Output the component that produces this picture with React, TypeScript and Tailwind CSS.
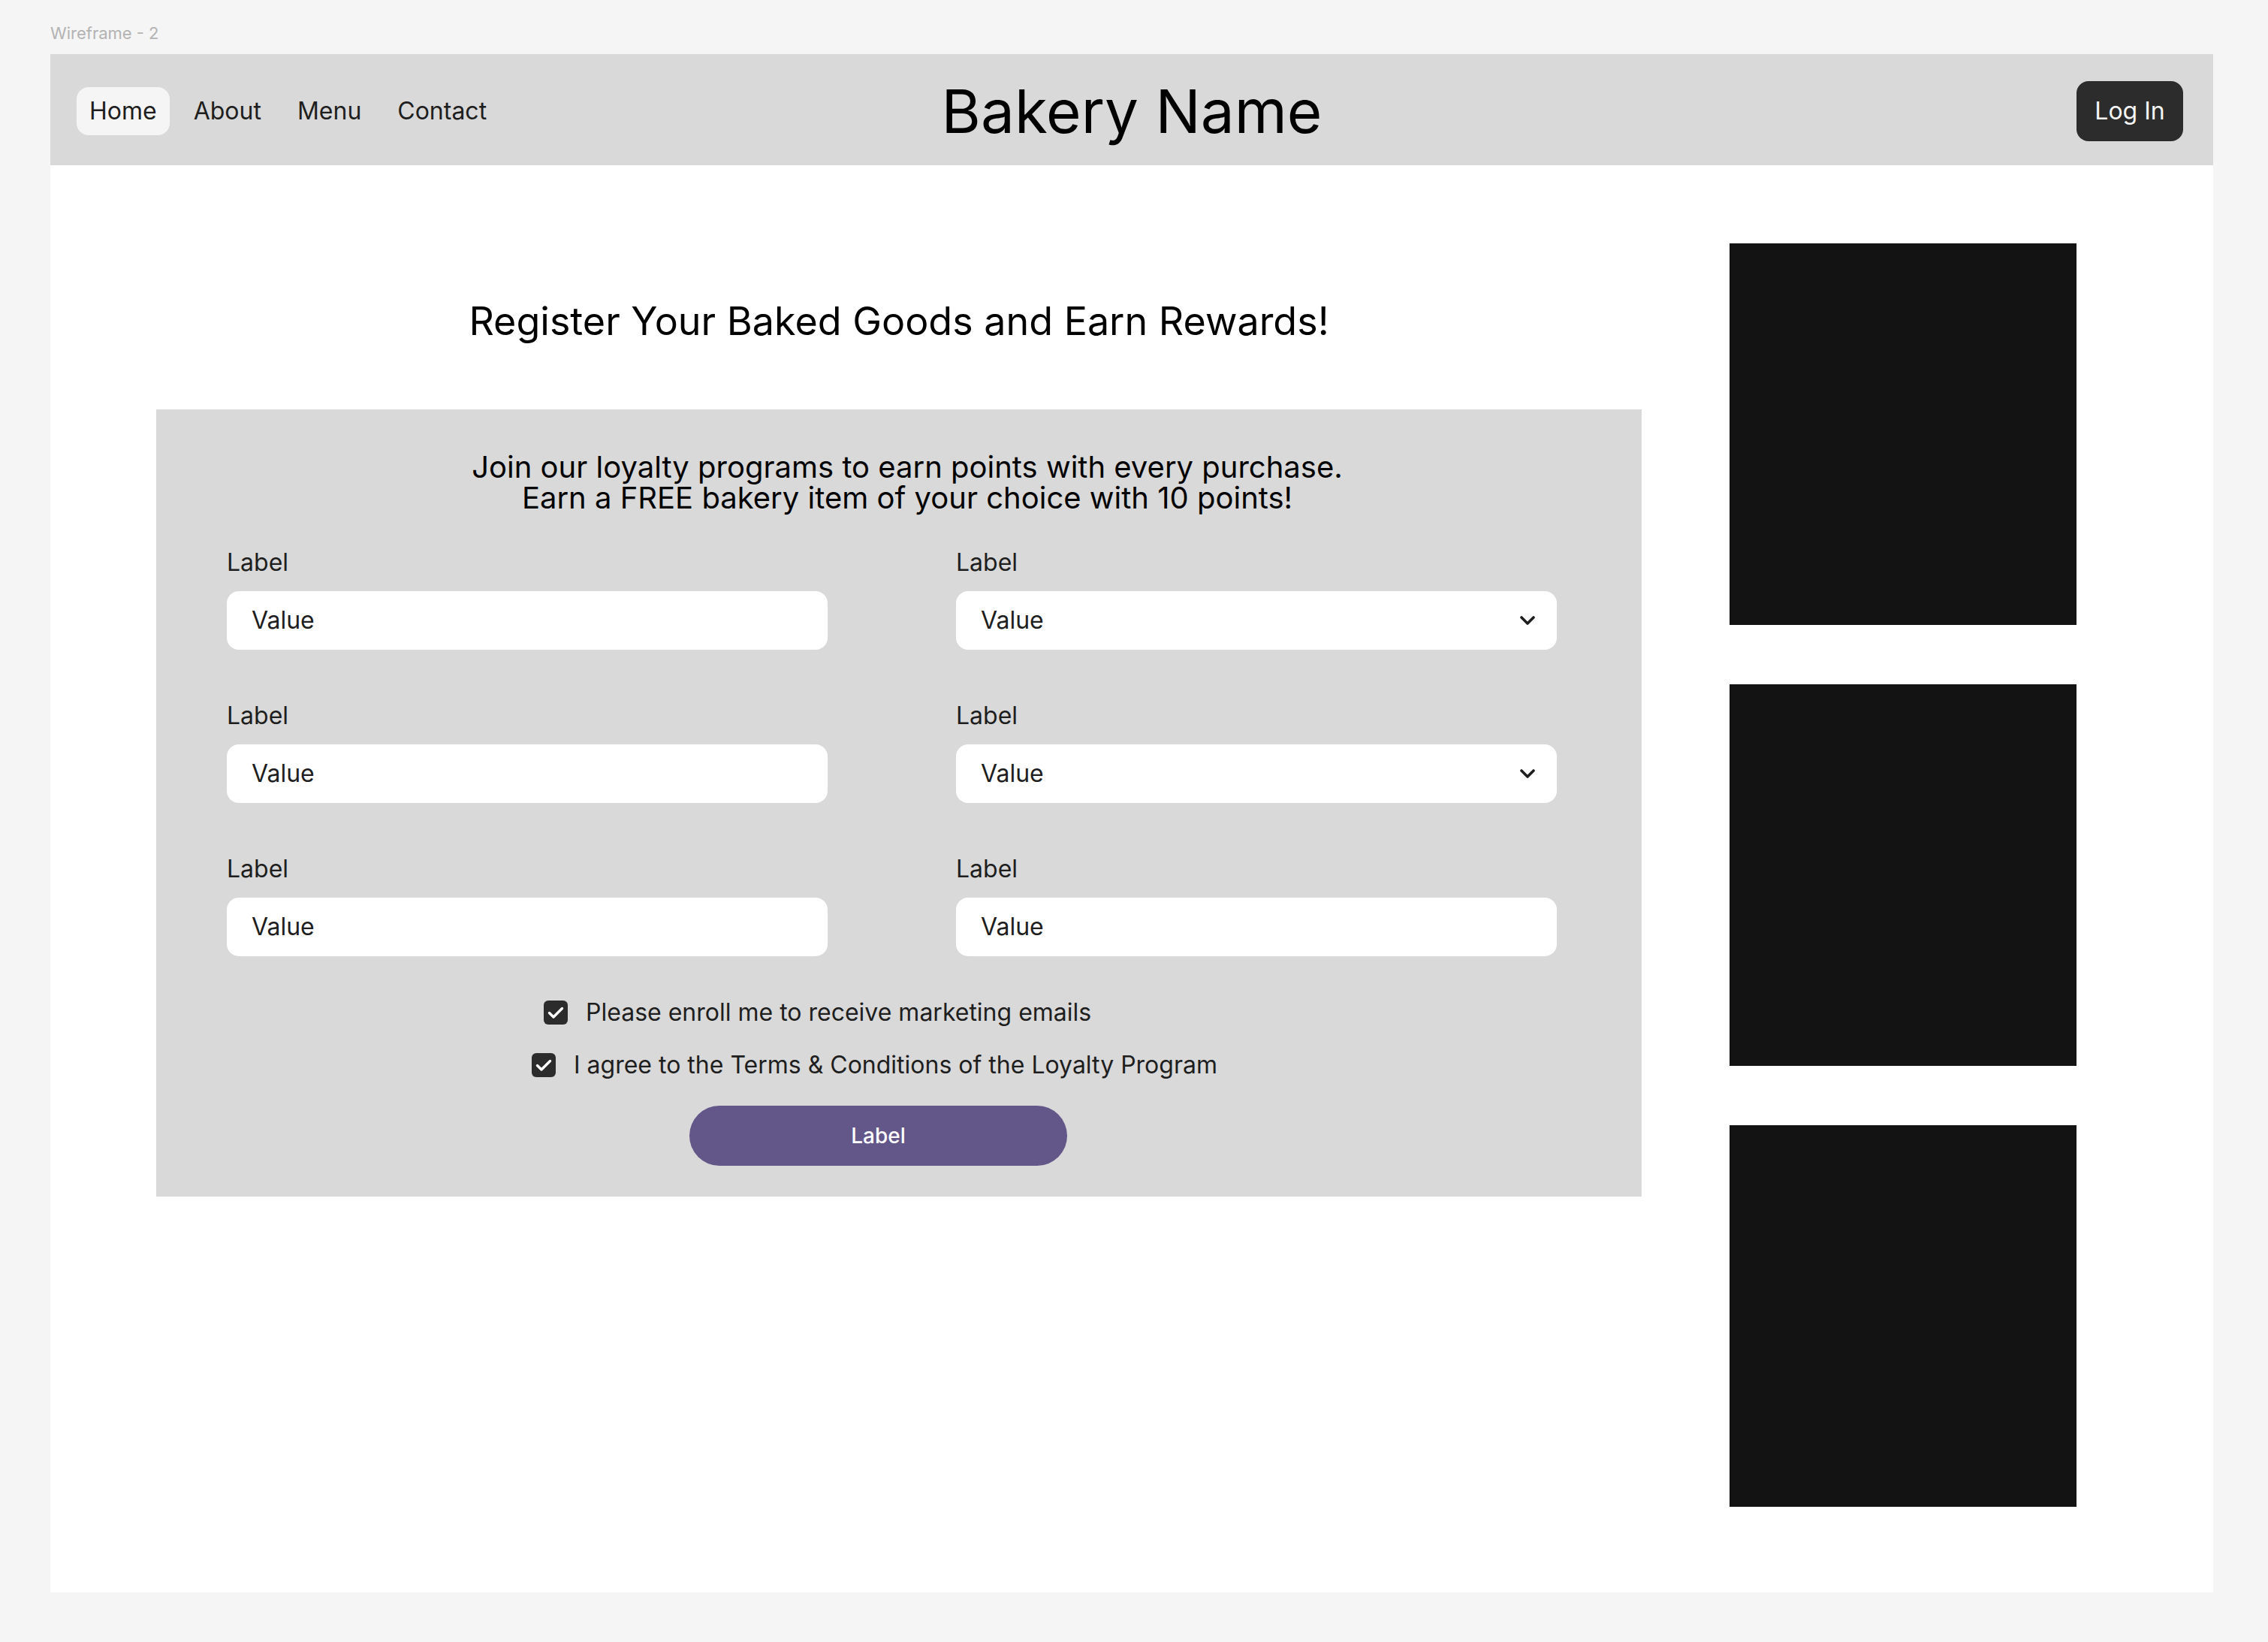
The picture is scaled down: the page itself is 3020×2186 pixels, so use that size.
import React from "react";

function Chevron() {
  return (
    <svg width="22" height="14" viewBox="0 0 22 14" fill="none">
      <polyline
        points="3,3 11,11 19,3"
        stroke="#1e1e1e"
        strokeWidth="3.6"
        strokeLinecap="round"
        strokeLinejoin="round"
      />
    </svg>
  );
}

function Check() {
  return (
    <div className="w-[32px] h-[32px] rounded-[6px] bg-[#2c2c2c] flex items-center justify-center shrink-0">
      <svg width="32" height="32" viewBox="0 0 32 32" fill="none">
        <polyline
          points="7.5,16.5 13,22 24.5,10.5"
          stroke="#ffffff"
          strokeWidth="3.4"
          strokeLinecap="round"
          strokeLinejoin="round"
        />
      </svg>
    </div>
  );
}

function Field({ select = false }: { select?: boolean }) {
  return (
    <div className="flex flex-col w-[800px]">
      <div className="text-[32px] leading-[45px] text-[#1e1e1e]">Label</div>
      <div className="mt-[16px] h-[78px] bg-white rounded-[16px] flex items-center justify-between pl-[33px] pr-[28px]">
        <span className="text-[32px] leading-[40px] text-[#1e1e1e]">Value</span>
        {select && <Chevron />}
      </div>
    </div>
  );
}

export default function App() {
  return (
    <div className="w-[3020px] h-[2186px] bg-[#f5f5f5] font-['Inter',sans-serif] overflow-hidden">
      <div className="pl-[67px] pt-[31px] text-[22px] leading-[26px] text-[#b3b3b3]">Wireframe - 2</div>
      <div className="ml-[67px] mt-[15px] w-[2880px] h-[2048px] bg-white">
        {/* Header */}
        <div className="h-[148px] pt-[3px] bg-[#d9d9d9] grid grid-cols-[1fr_auto_1fr] items-center">
          <nav className="flex items-center gap-[16px] pl-[35px]">
            <div className="h-[64px] px-[17px] rounded-[16px] bg-[#f5f5f5] flex items-center text-[32px] text-[#1e1e1e]">Home</div>
            <div className="h-[64px] px-[16px] flex items-center text-[32px] text-[#1e1e1e]">About</div>
            <div className="h-[64px] px-[16px] flex items-center text-[32px] text-[#1e1e1e]">Menu</div>
            <div className="h-[64px] px-[16px] flex items-center text-[32px] text-[#1e1e1e]">Contact</div>
          </nav>
          <div className="text-[80px] leading-[96px] text-black">Bakery Name</div>
          <div className="flex justify-end pr-[40px]">
            <div className="w-[142px] h-[80px] rounded-[16px] bg-[#2c2c2c] flex items-center justify-center text-[32px] text-[#f5f5f5]">Log In</div>
          </div>
        </div>

        {/* Body */}
        <div className="flex items-start">
          <div className="ml-[141px] w-[1978px]">
            <div className="mt-[175px] text-center text-[52px] leading-[66px] text-black">
              Register Your Baked Goods and Earn Rewards!
            </div>
            <div className="mt-[84px] h-[1048px] bg-[#d9d9d9] flex flex-col">
              <div className="pt-[56px] pl-[22px] text-center text-[40px] leading-[41px] text-black">
                <div>Join our loyalty programs to earn points with every purchase.</div>
                <div>Earn a FREE bakery item of your choice with 10 points!</div>
              </div>
              <div className="mt-[43px] ml-[94px] grid grid-cols-[800px_800px] gap-x-[171px] gap-y-[65px]">
                <Field />
                <Field select />
                <Field />
                <Field select />
                <Field />
                <Field />
              </div>
              <div className="mt-[52px] flex flex-col gap-[25px] text-[32px] leading-[45px] text-[#1e1e1e]">
                <div className="ml-[516px] flex items-center gap-[24px]">
                  <Check />
                  <span>Please enroll me to receive marketing emails</span>
                </div>
                <div className="ml-[500px] flex items-center gap-[24px]">
                  <Check />
                  <span>I agree to the Terms &amp; Conditions of the Loyalty Program</span>
                </div>
              </div>
              <div className="mt-[32px] ml-[710px] w-[503px] h-[80px] rounded-full bg-[#635689] flex items-center justify-center text-[28px] font-medium text-white">
                Label
              </div>
            </div>
          </div>
          <div className="ml-[117px] mt-[104px] flex flex-col gap-[79px]">
            <div className="w-[462px] h-[508px] bg-[#131313]" />
            <div className="w-[462px] h-[508px] bg-[#131313]" />
            <div className="w-[462px] h-[508px] bg-[#131313]" />
          </div>
        </div>
      </div>
    </div>
  );
}
